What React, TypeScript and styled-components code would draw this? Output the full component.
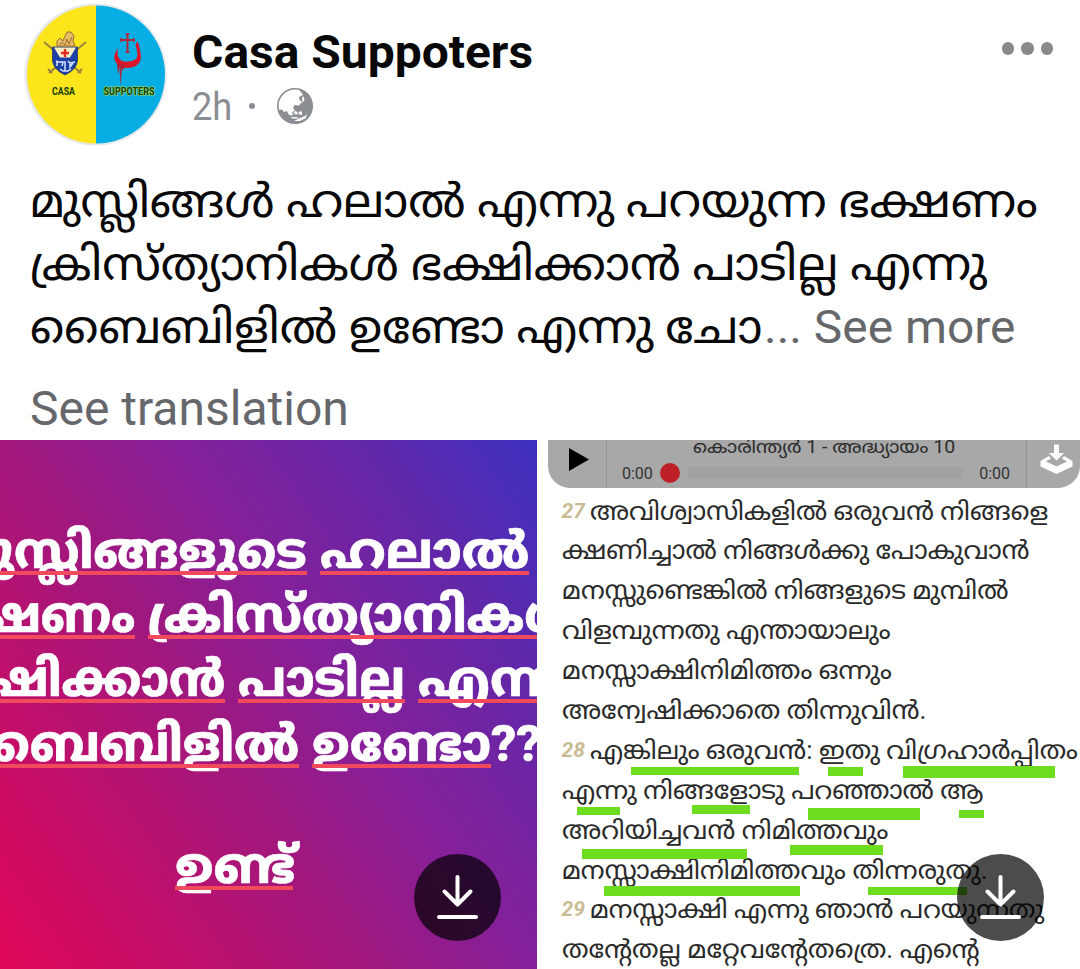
import React, { useLayoutEffect, useRef, useState } from 'react';
import styled, { createGlobalStyle } from 'styled-components';

const Global = createGlobalStyle`
  * { box-sizing: border-box; }
  body { margin: 0; background: #fff; font-family: Roboto, "Noto Sans Malayalam", "Noto Sans", sans-serif; }
`;

const Post = styled.article`
  width: 1080px;
  height: 969px;
  overflow: hidden;
  display: flex;
  flex-direction: column;
  background: #fff;
`;

const Header = styled.header`
  height: 170px;
  display: flex;
  align-items: flex-start;
  padding: 3px 24px 0 24px;
`;

const Avatar = styled.div`
  width: 143px;
  height: 143px;
  flex: none;
  svg { display: block; }
`;

const Who = styled.div`
  flex: 1;
  padding: 19px 0 0 25px;
`;

const Name = styled.h1`
  margin: 0;
  height: 61px;
  line-height: 60px;
  font-size: 46px;
  font-weight: 700;
  color: #080809;
`;

const Meta = styled.div`
  display: flex;
  align-items: center;
  height: 46px;
  font-size: 38px;
  color: #8a8d91;
`;

const Age = styled.span`
  padding-top: 2px;
`;

const Dot = styled.i`
  width: 6px;
  height: 6px;
  border-radius: 50%;
  background: #8a8d91;
  margin: 0 22px 0 17px;
`;

const Menu = styled.div`
  display: flex;
  gap: 7px;
  padding: 39px 3px 0 0;
  i { width: 12.5px; height: 12.5px; border-radius: 50%; background: #8a8a8d; }
`;

const Body = styled.section`
  height: 270px;
  padding: 0 30px;
`;

const BodyLine = styled.p`
  margin: 0;
  height: 63px;
  line-height: 63px;
  display: flex;
  font-size: 46px;
  color: #080809;
  white-space: pre;
`;

const More = styled.span`
  color: #65676b;
  margin-left: 2px;
`;

const Translate = styled.p`
  margin: 20px 0 0;
  height: 60px;
  line-height: 60px;
  font-size: 48px;
  color: #65676b;
`;

const Media = styled.div`
  display: grid;
  grid-template-columns: 537px 532px;
  column-gap: 11px;
  height: 529px;
`;

const Poster = styled.section`
  position: relative;
  overflow: hidden;
  padding-top: 78.5px;
  background: linear-gradient(56deg, #e00858 0%, #c60e68 18%, #a2177c 40%, #84209a 60%, #6626a6 78%, #3c30bf 100%);
`;

const PosterLine = styled.p<{ $gap?: number }>`
  margin: ${p => p.$gap || 0}px 0 0;
  height: 64.4px;
  line-height: 64.4px;
  display: flex;
  font-size: 50px;
  font-weight: 800;
  color: #fff;
  white-space: pre;
  -webkit-text-stroke: 0.6px #fff;
`;

const Word = styled.span<{ $w: number; $start?: boolean; $gap?: number; $plain?: boolean }>`
  position: relative;
  flex: none;
  width: ${p => p.$w}px;
  margin-left: ${p => p.$gap || 0}px;
  display: flex;
  justify-content: ${p => (p.$start ? 'flex-end' : 'flex-start')};
  &::after {
    content: '';
    display: ${p => (p.$plain ? 'none' : 'block')};
    position: absolute;
    left: 0;
    right: 0;
    top: 52px;
    height: 4px;
    background: #f04a5c;
  }
`;

const Reader = styled.section`
  position: relative;
  overflow: hidden;
`;

const Player = styled.div`
  height: 48px;
  display: grid;
  grid-template-columns: 58px 1fr 53px;
  background: #a8a8a8;
  border-radius: 0 0 22px 22px;
  overflow: hidden;
  color: #333;
`;

const Cell = styled.div`
  display: flex;
  justify-content: center;
  svg { display: block; }
`;

const Track = styled.div`
  border: solid #949494;
  border-width: 0 1px;
`;

const Chapter = styled.div`
  height: 22px;
  padding-left: 86px;
  font-size: 18px;
  line-height: 14px;
  white-space: nowrap;
  color: #2c2c2c;
`;

const Seek = styled.div`
  display: flex;
  align-items: center;
  height: 22px;
  padding: 0 16px 0 15px;
  font-size: 16px;
  i { width: 20px; height: 20px; border-radius: 50%; background: #bd2026; margin-left: 7px; }
  b { flex: 1; height: 12px; background: #a2a2a2; margin: 0 16px 0 8px; }
`;

const Verses = styled.div`
  padding: 3.5px 0 0 13.5px;
`;

const Verse = styled.p`
  margin: 0;
  height: 39.9px;
  line-height: 39.9px;
  display: flex;
  white-space: pre;
  font-size: 25px;
  color: #2a2a2a;
`;

const Num = styled.span`
  flex: none;
  width: 28.5px;
  font-size: 21px;
  font-weight: 700;
  font-style: italic;
  color: #c9bc94;
`;

const Mark = styled.i<{ $x: number; $y: number; $w: number; $h: number }>`
  position: absolute;
  left: ${p => p.$x - 548}px;
  top: ${p => p.$y - 440}px;
  width: ${p => p.$w}px;
  height: ${p => p.$h}px;
  background: #6fdd1f;
`;

const Download = styled.button<{ $x: number }>`
  position: absolute;
  left: ${p => p.$x}px;
  top: 414px;
  width: 87px;
  height: 87px;
  padding: 0;
  border: 0;
  border-radius: 50%;
  background: rgba(0, 0, 0, 0.7);
  svg { display: block; }
`;

const FitBox = styled.span<{ $w: number }>`
  display: block;
  flex: none;
  width: ${p => p.$w}px;
`;

const FitText = styled.span`
  display: inline-block;
  transform-origin: 0 50%;
  white-space: pre;
`;

/* Stretches one run of text to an exact width. */
function Fit({ w, children }: { w: number; children: React.ReactNode }) {
  const ref = useRef<HTMLSpanElement>(null);
  const [scale, setScale] = useState(1);
  useLayoutEffect(() => {
    if (ref.current && ref.current.offsetWidth) setScale(w / ref.current.offsetWidth);
  }, [w]);
  return (
    <FitBox $w={w}>
      <FitText ref={ref} style={{ transform: `scaleX(${scale})` }}>{children}</FitText>
    </FitBox>
  );
}

const verses: { n?: number; t: string; w: number }[] = [
  { n: 27, t: 'അവിശ്വാസികളിൽ ഒരുവൻ നിങ്ങളെ', w: 458 },
  { t: 'ക്ഷണിച്ചാൽ നിങ്ങൾക്കു പോകുവാൻ', w: 467 },
  { t: 'മനസ്സുണ്ടെങ്കിൽ നിങ്ങളുടെ മുമ്പിൽ', w: 446 },
  { t: 'വിളമ്പുന്നതു എന്തായാലും', w: 329 },
  { t: 'മനസ്സാക്ഷിനിമിത്തം ഒന്നും', w: 330 },
  { t: 'അന്വേഷിക്കാതെ തിന്നുവിൻ.', w: 364 },
  { n: 28, t: 'എങ്കിലും ഒരുവൻ: ഇതു വിഗ്രഹാർപ്പിതം', w: 488 },
  { t: 'എന്നു നിങ്ങളോടു പറഞ്ഞാൽ ആ', w: 421 },
  { t: 'അറിയിച്ചവൻ നിമിത്തവും', w: 326 },
  { t: 'മനസ്സാക്ഷിനിമിത്തവും തിന്നരുതു.', w: 426 },
  { n: 29, t: 'മനസ്സാക്ഷി എന്നു ഞാൻ പറയുന്നതു', w: 454 },
  { t: 'തന്റേതല്ല മറ്റേവന്റേതത്രെ. എന്റെ', w: 418 },
];

const marks = [
  [631, 766.5, 168, 8.5], [828, 767, 34.5, 9], [903, 766, 152, 12],
  [577, 807, 43, 8], [692, 805, 58, 9], [808, 807.5, 112, 12], [959, 809.5, 25, 8.5],
  [582, 849, 165, 9.5], [790, 844.5, 93, 10],
  [604, 886, 196, 9.5], [867.5, 887, 99, 8],
];

function DownloadIcon() {
  return (
    <svg width="87" height="87" viewBox="0 0 87 87" fill="none" stroke="#fff" strokeWidth="4" strokeLinecap="round" strokeLinejoin="round">
      <path d="M43.5 23V49M30.5 37.5L43.5 50.5L56.5 37.5M25 63H62" />
    </svg>
  );
}

export default function App() {
  return (
    <Post>
      <Global />
      <Header>
        <Avatar>
          <svg width="143" height="143" viewBox="0 0 143 143">
            <circle cx="71.500" cy="71.500" r="71" fill="#e6e7ea" />
            <path d="M72 2.500A69 69 0 0 0 72 140.500Z" fill="#fde51c" />
            <path d="M72 2.500A69 69 0 0 1 72 140.500Z" fill="#06aee4" />
            <g fill="none" stroke="#97803a" strokeWidth="1.800"><path d="M20 39L57 70M62 39L25 70M24 66l4 4M58 66l-4 4" /></g>
            <path d="M28.500 44H53.500V58Q52 67 41 72Q30 67 28.500 58Z" fill="#1b3fa6" stroke="#2c3566" strokeWidth=".8" />
            <path d="M30 44.500H52L46 54.500H36Z" fill="#f9ecc8" />
            <path d="M41 46V54M37 50H45" stroke="#e02a1c" strokeWidth="2.400" />
            <path d="M33 43V38L36 35L39 38L41 33L43 29L47 29L50 33L49 38L51 43Z" fill="#e5bd62" stroke="#9a6a3a" strokeWidth="1" />
            <path d="M36 42l2-3 3 3 2-6 2 5 3-7" fill="none" stroke="#a8623a" strokeWidth="1" />
            <path d="M32 58l2 1h5l-1 4M33 63v-4M44 58l2 2 5-1M46 60v4l3-4M36 66l3 2h5l3-2M41 58v10" stroke="#d6e4fa" strokeWidth="1.500" fill="none" />
            <path d="M94 45Q88 53 91.500 59Q95 65 104 65Q117 64 117 53Q116.500 45 113.500 38L111.500 42Q115 53 112 56Q106 60 98 58Q92 55 94 45Z" fill="#d8182a" />
            <path d="M93 60L94 72L95.500 64L96.500 83L98 65L100 68V62Z" fill="#b3243a" />
            <path d="M103.500 31V50M97 37H110" stroke="#b32633" strokeWidth="2" fill="none" />
            <path d="M101.500 31h4M97 35v4M110 35v4M101.500 49h4" stroke="#b32633" strokeWidth="1.500" fill="none" />
            <text x="39.500" y="91.500" fontSize="10" fontWeight="700" textAnchor="middle" fill="#12400f" textLength="23" lengthAdjust="spacingAndGlyphs">CASA</text>
            <text x="105" y="92" fontSize="10" fontWeight="700" textAnchor="middle" fill="#12400f" stroke="#a8d84a" strokeWidth="1.200" paintOrder="stroke" textLength="51" lengthAdjust="spacingAndGlyphs">SUPPOTERS</text>
          </svg>
        </Avatar>
        <Who>
          <Name><Fit w={341}>Casa Suppoters</Fit></Name>
          <Meta>
            <Age><Fit w={40}>2h</Fit></Age><Dot />
            <svg width="36" height="36" viewBox="0 0 36 36">
              <circle cx="18" cy="18" r="17.200" fill="#fff" stroke="#8a8d91" strokeWidth="1.600" />
              <path d="M21 1Q36 4 35.500 19Q34 35 18 35.500Q5 34 1.500 22L5 21.500L7 24L10 23L12 27L16 27.500L15 24L18 22.500L16 20L17.500 17L22 17.500L25 14L22.500 12L22 9L26 7L24 4Z" fill="#8a8d91" />
              <path d="M16 24l3-1 2 2-2 2zM21 26l2-3 2 1v3zM14 29l6 0 2 1.500-7 0zM23 30l5-2 2-2-1 4-6 3-6 0zM25 10l1.500-2 1 4-2 3z" fill="#fff" />
            </svg>
          </Meta>
        </Who>
        <Menu><i /><i /><i /></Menu>
      </Header>
      <Body>
        <BodyLine><Fit w={1008}>മുസ്ലിങ്ങൾ ഹലാൽ എന്നു പറയുന്ന ഭക്ഷണം</Fit></BodyLine>
        <BodyLine><Fit w={957}>ക്രിസ്ത്യാനികൾ ഭക്ഷിക്കാൻ പാടില്ല എന്നു</Fit></BodyLine>
        <BodyLine><Fit w={732}>ബൈബിളിൽ ഉണ്ടോ എന്നു ചോ</Fit><More><Fit w={251}>... See more</Fit></More></BodyLine>
        <Translate><Fit w={319}>See translation</Fit></Translate>
      </Body>
      <Media>
        <Poster>
          <PosterLine><Word $w={307} $start><Fit w={352}>മുസ്ലിങ്ങളുടെ</Fit></Word><Word $w={209} $gap={13}><Fit w={209}>ഹലാൽ</Fit></Word></PosterLine>
          <PosterLine><Word $w={135} $start><Fit w={220}>ഭക്ഷണം</Fit></Word><Word $w={389} $gap={13}><Fit w={434}>ക്രിസ്ത്യാനികൾ</Fit></Word></PosterLine>
          <PosterLine><Word $w={225} $start><Fit w={303}>ഭക്ഷിക്കാൻ</Fit></Word><Word $w={167} $gap={13}><Fit w={167}>പാടില്ല</Fit></Word><Word $w={119} $gap={13}><Fit w={162}>എന്നു</Fit></Word></PosterLine>
          <PosterLine><Word $w={299} $start><Fit w={346}>ബൈബിളിൽ</Fit></Word><Word $w={179} $gap={13}><Fit w={179}>ഉണ്ടോ</Fit></Word><Word $w={48} $plain><Fit w={50}>??</Fit></Word></PosterLine>
          <PosterLine $gap={58}><Word $w={118} $gap={175}><Fit w={120}>ഉണ്ട്</Fit></Word></PosterLine>
          <Download $x={414}><DownloadIcon /></Download>
        </Poster>
        <Reader>
          <Player>
            <Cell><svg width="58" height="48"><path d="M21 8L41 19.500L21 31Z" fill="#000" /></svg></Cell>
            <Track>
              <Chapter><Fit w={262}>കൊരിന്ത്യർ 1 - അദ്ധ്യായം 10</Fit></Chapter>
              <Seek>0:00<i /><b />0:00</Seek>
            </Track>
            <Cell>
              <svg width="53" height="48" viewBox="0 0 53 48">
                <path d="M27 4.500H32V13H37L29.500 20.500L22 13H27Z" fill="#fff" />
                <path d="M22 16L13.500 21V26.500L29.500 34L45.500 26.500V21L37 16L35 18.500L40 21.500L29.500 26.500L19 21.500L24 18.500Z" fill="#fff" />
              </svg>
            </Cell>
          </Player>
          <Verses>
            {verses.map((v, i) => (
              <Verse key={i}>{v.n && <Num>{v.n}</Num>}<Fit w={v.w}>{v.t}</Fit></Verse>
            ))}
          </Verses>
          {marks.map(([x, y, w, h]) => <Mark key={`${x}-${y}`} $x={x} $y={y} $w={w} $h={h} />)}
          <Download $x={409}><DownloadIcon /></Download>
        </Reader>
      </Media>
    </Post>
  );
}
